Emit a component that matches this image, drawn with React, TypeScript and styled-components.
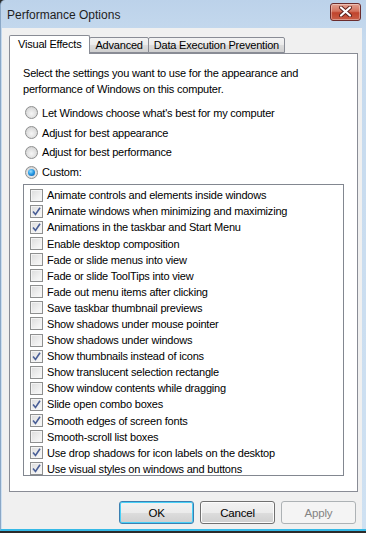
import React from 'react';
import styled, { createGlobalStyle } from 'styled-components';

const GlobalStyle = createGlobalStyle`
  html, body {
    margin: 0;
    padding: 0;
    background: #2b2b2b;
  }
  body {
    font-family: "Liberation Sans", Arial, sans-serif;
    font-size: 11px;
    letter-spacing: -0.2px;
    color: #000;
  }
`

const Window = styled.div`
  width: 366px;
  height: 531px;
  box-sizing: border-box;
  display: flex;
  flex-direction: column;
  background: linear-gradient(180deg, #bcd2ea 0%, #c6daee 40px, #cfe1f2 100%);
  border-left: 1px solid #8aa7c6;
  border-bottom: 2px solid #35b9e6;
  border-top-left-radius: 5px;
  overflow: hidden;
`

const TitleBar = styled.div`
  height: 28px;
  flex-shrink: 0;
  display: flex;
  align-items: center;
  justify-content: space-between;
  padding: 0 5px 0 6px;
  box-sizing: border-box;
`

const Title = styled.div`
  font-size: 12px;
  letter-spacing: 0;
  color: #1e1e1e;
  padding-top: 1px;
`

const CloseButton = styled.div`
  width: 29px;
  height: 16px;
  margin-top: -5px;
  border: 1px solid #6b2c2c;
  border-radius: 3px;
  background: linear-gradient(180deg, #e2a08f 0%, #d4735e 45%, #c0442c 55%, #c95e47 100%);
  box-shadow: inset 0 0 0 1px rgba(255, 255, 255, 0.35);
  display: flex;
  align-items: center;
  justify-content: center;
`

const Client = styled.div`
  flex: 1;
  margin: 0 4px 0 1px;
  background: #f0f0f0;
  display: flex;
  flex-direction: column;
  padding: 6px 5px 0 7px;
  box-sizing: border-box;
`

const TabStrip = styled.div`
  display: flex;
  align-items: flex-end;
  height: 19px;
  position: relative;
  z-index: 1;
`

const Tab = styled.div<{ $active?: boolean }>`
  box-sizing: border-box;
  height: ${p => (p.$active ? '19px' : '16px')};
  padding: ${p => (p.$active ? '0 8px 0 8px' : '0 5px')};
  margin-left: ${p => (p.$active ? '0' : '-1px')};
  border: 1px solid #898c95;
  border-bottom: ${p => (p.$active ? 'none' : '1px solid #898c95')};
  background: ${p => (p.$active ? '#fff' : 'linear-gradient(180deg, #f3f3f3 0%, #ebebeb 50%, #dddddd 51%, #cfcfcf 100%)')};
  display: flex;
  align-items: center;
  line-height: 1;
  padding-bottom: ${p => (p.$active ? '2px' : '0')};
  margin-bottom: ${p => (p.$active ? '-1px' : '0')};
  border-top-left-radius: 2px;
  border-top-right-radius: 2px;
`

const Panel = styled.div`
  height: 439px;
  width: 349px;
  box-sizing: border-box;
  border: 1px solid #898c95;
  background: #fff;
  padding: 11px 12px 0 13px;
`

const Intro = styled.p`
  margin: 0 0 6px;
  line-height: 16px;
`

const RadioRow = styled.div`
  display: flex;
  align-items: center;
  gap: 4px;
  height: 19.8px;
  padding-left: 2px;
`

const Radio = styled.span<{ $checked?: boolean }>`
  width: 13px;
  height: 13px;
  box-sizing: border-box;
  border-radius: 50%;
  border: 1px solid #8e8f8f;
  background: radial-gradient(circle at 50% 60%, #f6f6f6 0%, #dcdcdc 60%, #c8c8c8 100%);
  display: flex;
  align-items: center;
  justify-content: center;

  &::after {
    content: '';
    display: ${p => (p.$checked ? 'block' : 'none')};
    width: 7px;
    height: 7px;
    border-radius: 50%;
    background: radial-gradient(circle at 40% 35%, #9fe0ff 0%, #2a9de6 45%, #0a4f9e 100%);
  }
`

const ListBox = styled.div`
  margin-top: 2px;
  width: 321px;
  height: 292px;
  box-sizing: border-box;
  border: 1px solid #828790;
  padding: 2px 0 0 6px;
`

const CheckRow = styled.div`
  display: flex;
  align-items: center;
  gap: 4px;
  height: 16.1px;
`

const Box = styled.span`
  width: 13px;
  height: 13px;
  flex-shrink: 0;
  box-sizing: border-box;
  border: 1px solid #8e8f8f;
  background: linear-gradient(135deg, #dcdcdc 0%, #f2f2f2 70%, #fafafa 100%);
  box-shadow: inset 0 0 0 1px #f4f4f4;
  display: flex;
  align-items: center;
  justify-content: center;
`

const Footer = styled.div`
  display: flex;
  justify-content: flex-end;
  gap: 6px;
  padding: 9px 1px 0 0;
`

const Button = styled.div<{ $default?: boolean; $disabled?: boolean }>`
  width: 75px;
  height: 23px;
  box-sizing: border-box;
  border-radius: 3px;
  border: 1px solid ${p => (p.$default ? '#3c7fb1' : p.$disabled ? '#adb2b5' : '#707070')};
  background: ${p =>
    p.$disabled
      ? '#f4f4f4'
      : 'linear-gradient(180deg, #f2f2f2 0%, #ebebeb 50%, #dddddd 51%, #cfcfcf 100%)'};
  box-shadow: ${p => (p.$default ? 'inset 0 0 0 1px #48d0f7' : p.$disabled ? 'none' : 'inset 0 0 0 1px #fcfcfc')};
  color: ${p => (p.$disabled ? '#838383' : '#000')};
  font-size: 11.5px;
  display: flex;
  align-items: center;
  justify-content: center;
`

const CloseGlyph = () => (
  <svg width="13" height="11" viewBox="0 0 13 11">
    <path d="M2 1.5 L11 9.5 M11 1.5 L2 9.5" stroke="#5a1f1a" strokeWidth="4" strokeLinecap="round" />
    <path d="M2 1.5 L11 9.5 M11 1.5 L2 9.5" stroke="#fff" strokeWidth="2.2" strokeLinecap="round" />
  </svg>
)

const Check = () => (
  <svg width="9" height="9" viewBox="0 0 9 9">
    <path d="M1 4.5 L3.5 7.5 L8 0.8" fill="none" stroke="#4a5f97" strokeWidth="1.6" />
  </svg>
)

const radios = [
  { label: "Let Windows choose what's best for my computer", checked: false },
  { label: 'Adjust for best appearance', checked: false },
  { label: 'Adjust for best performance', checked: false },
  { label: 'Custom:', checked: true },
]

const effects = [
  { label: 'Animate controls and elements inside windows', checked: false },
  { label: 'Animate windows when minimizing and maximizing', checked: true },
  { label: 'Animations in the taskbar and Start Menu', checked: true },
  { label: 'Enable desktop composition', checked: false },
  { label: 'Fade or slide menus into view', checked: false },
  { label: 'Fade or slide ToolTips into view', checked: false },
  { label: 'Fade out menu items after clicking', checked: false },
  { label: 'Save taskbar thumbnail previews', checked: false },
  { label: 'Show shadows under mouse pointer', checked: false },
  { label: 'Show shadows under windows', checked: false },
  { label: 'Show thumbnails instead of icons', checked: true },
  { label: 'Show translucent selection rectangle', checked: false },
  { label: 'Show window contents while dragging', checked: false },
  { label: 'Slide open combo boxes', checked: true },
  { label: 'Smooth edges of screen fonts', checked: true },
  { label: 'Smooth-scroll list boxes', checked: false },
  { label: 'Use drop shadows for icon labels on the desktop', checked: true },
  { label: 'Use visual styles on windows and buttons', checked: true },
]

const App = () => {
  return (
    <>
      <GlobalStyle />
      <Window>
        <TitleBar>
          <Title>Performance Options</Title>
          <CloseButton>
            <CloseGlyph />
          </CloseButton>
        </TitleBar>
        <Client>
          <TabStrip>
            <Tab $active>Visual Effects</Tab>
            <Tab>Advanced</Tab>
            <Tab>Data Execution Prevention</Tab>
          </TabStrip>
          <Panel>
            <Intro>
              Select the settings you want to use for the appearance and
              <br />
              performance of Windows on this computer.
            </Intro>
            {radios.map(r => (
              <RadioRow key={r.label}>
                <Radio $checked={r.checked} />
                {r.label}
              </RadioRow>
            ))}
            <ListBox>
              {effects.map(e => (
                <CheckRow key={e.label}>
                  <Box>{e.checked && <Check />}</Box>
                  {e.label}
                </CheckRow>
              ))}
            </ListBox>
          </Panel>
          <Footer>
            <Button $default>OK</Button>
            <Button>Cancel</Button>
            <Button $disabled>Apply</Button>
          </Footer>
        </Client>
      </Window>
    </>
  );
};

export default App;
